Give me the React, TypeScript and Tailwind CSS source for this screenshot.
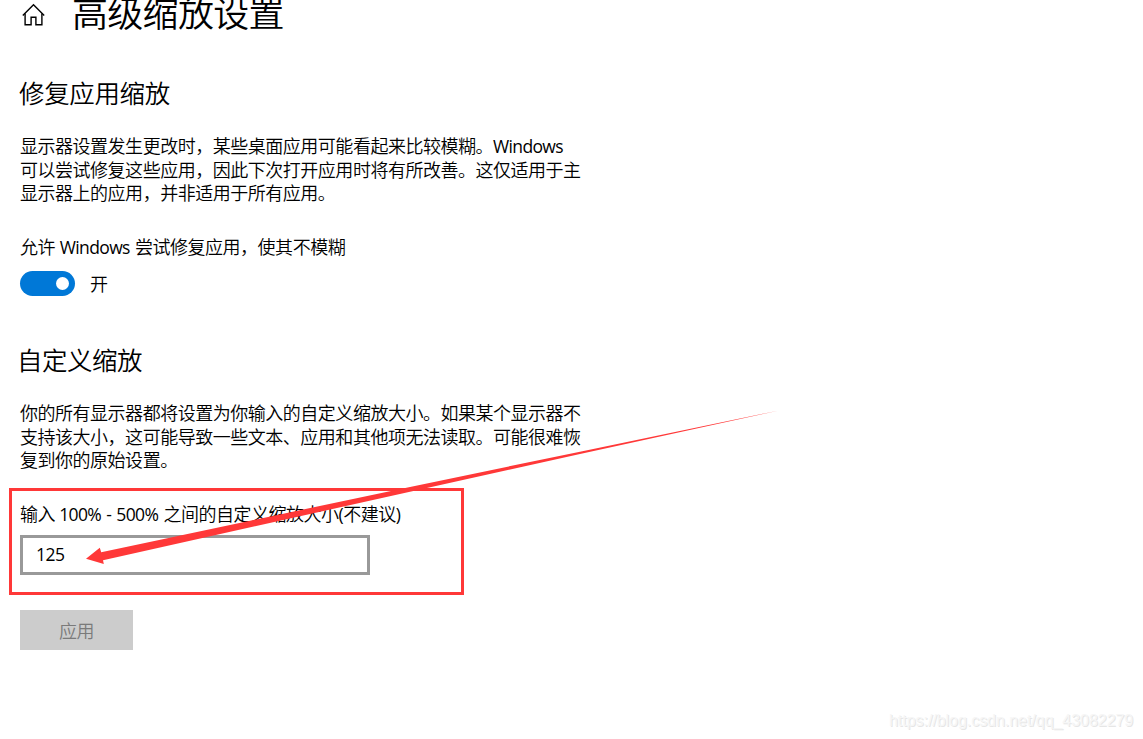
import React from "react";
import clsx from "clsx";

function HomeIcon() {
  return (
    <svg
      className="mt-[3px] ml-0.5 shrink-0"
      width={24}
      height={24}
      viewBox="0 0 24 24"
      fill="none"
      stroke="#000"
      strokeWidth={1.4}
    >
      <path d="M0.8 12.4 11.5 1.8 22.2 12.4" />
      <path d="M3.1 10.4V21.8H9.1V14.2H13.9V21.8H19.9V10.4" />
    </svg>
  );
}

function Latin({
  children,
  className,
}: {
  children: React.ReactNode;
  className?: string;
}) {
  return (
    <span
      className={clsx("text-[17.5px] font-normal tracking-[-0.65px]", className)}
    >
      {children}
    </span>
  );
}

function Lines({ lines }: { lines: React.ReactNode[] }) {
  return (
    <div className="whitespace-nowrap">
      {lines.map((line, i) => (
        <p key={i}>{line}</p>
      ))}
    </div>
  );
}

function Toggle() {
  const [on, setOn] = React.useState(true);
  return (
    <div className="flex items-center gap-[15px]">
      <button
        role="switch"
        aria-checked={on}
        aria-label="允许 Windows 尝试修复应用"
        onClick={() => setOn(!on)}
        className={clsx(
          "flex h-[25px] w-[55px] items-center rounded-full px-1.5",
          on ? "justify-end bg-[#0078d7]" : "justify-start bg-[#999999]"
        )}
      >
        <span className="size-[13px] rounded-full bg-white" />
      </button>
      <span className="-mb-0.5">{on ? "开" : "关"}</span>
    </div>
  );
}

// hand drawn marks that lie over the form
function Annotation() {
  return (
    <svg
      className="pointer-events-none absolute top-0 left-0"
      width={1143}
      height={739}
      viewBox="0 0 1143 739"
    >
      <rect
        x={10.5}
        y={489.5}
        width={452}
        height={104}
        fill="none"
        stroke="#ff3838"
        strokeWidth={3}
      />
      <path
        d="M86 558.7 99.8 547.8 101.2 552.2 410 486.9 580 451.7 779 410.5 580 453.9 410 491.7 103 560.2 103.8 564Z"
        fill="#ff3838"
      />
    </svg>
  );
}

export default function App() {
  const [scale, setScale] = React.useState("125");

  return (
    <main className="relative flex h-[739px] w-[1143px] flex-col items-start overflow-hidden bg-white px-5 font-['Open_Sans','Noto_Sans_CJK_SC',sans-serif] text-[18px] leading-[23.5px] font-[350] tracking-[-0.48px] text-black">
      <header className="flex h-[35px] items-start gap-[26px]">
        <HomeIcon />
        <h1 className="-mt-2.5 text-[36px] leading-[48px] tracking-[-0.7px] whitespace-nowrap">
          高级缩放设置
        </h1>
      </header>

      <section className="mt-[43px] flex flex-col items-start">
        <h2 className="mb-[27px] -ml-px text-[25.5px] leading-[30px] tracking-[-0.35px]">
          修复应用缩放
        </h2>
        <Lines
          lines={[
            <>
              显示器设置发生更改时，某些桌面应用可能看起来比较模糊。
              <Latin>Windows</Latin>
            </>,
            "可以尝试修复这些应用，因此下次打开应用时将有所改善。这仅适用于主",
            "显示器上的应用，并非适用于所有应用。",
          ]}
        />
        <p className="mt-[30px] mb-3 whitespace-nowrap">
          允许 <Latin className="mr-px ml-[0.6px]">Windows</Latin>{" "}
          尝试修复应用，使其不模糊
        </p>
        <Toggle />
      </section>

      <section className="mt-[49px] flex flex-col items-start">
        <h2 className="mb-[27px] -ml-[3px] text-[25.5px] leading-[30px]">
          自定义缩放
        </h2>
        <Lines
          lines={[
            "你的所有显示器都将设置为你输入的自定义缩放大小。如果某个显示器不",
            "支持该大小，这可能导致一些文本、应用和其他项无法读取。可能很难恢",
            "复到你的原始设置。",
          ]}
        />
        <label
          htmlFor="custom-scale"
          className="mt-[30px] mb-[9px] block whitespace-nowrap"
        >
          输入{" "}
          <Latin className="mr-px [word-spacing:1.2px]">100% - 500%</Latin>{" "}
          之间的自定义缩放大小<Latin>(</Latin>不建议<Latin>)</Latin>
        </label>
        <input
          id="custom-scale"
          value={scale}
          onChange={(e) => setScale(e.target.value)}
          className="h-10 w-[350px] border-[3px] border-[#999999] bg-white px-[13px] pb-0.5 text-[17.5px] font-normal tracking-[-0.5px] outline-none"
        />
        <button
          disabled
          className="mt-[35px] h-10 w-[113px] bg-[#cccccc] pt-[3px] text-[#7a7a7a]"
        >
          应用
        </button>
      </section>

      <Annotation />
      <span className="absolute top-[709px] left-[889px] font-['Liberation_Sans',sans-serif] text-base leading-6 font-normal tracking-[-0.04px] text-[#f6f6f6] [text-shadow:1px_1px_0_#e6e6e6]">
        https://blog.csdn.net/qq_43082279
      </span>
    </main>
  );
}
